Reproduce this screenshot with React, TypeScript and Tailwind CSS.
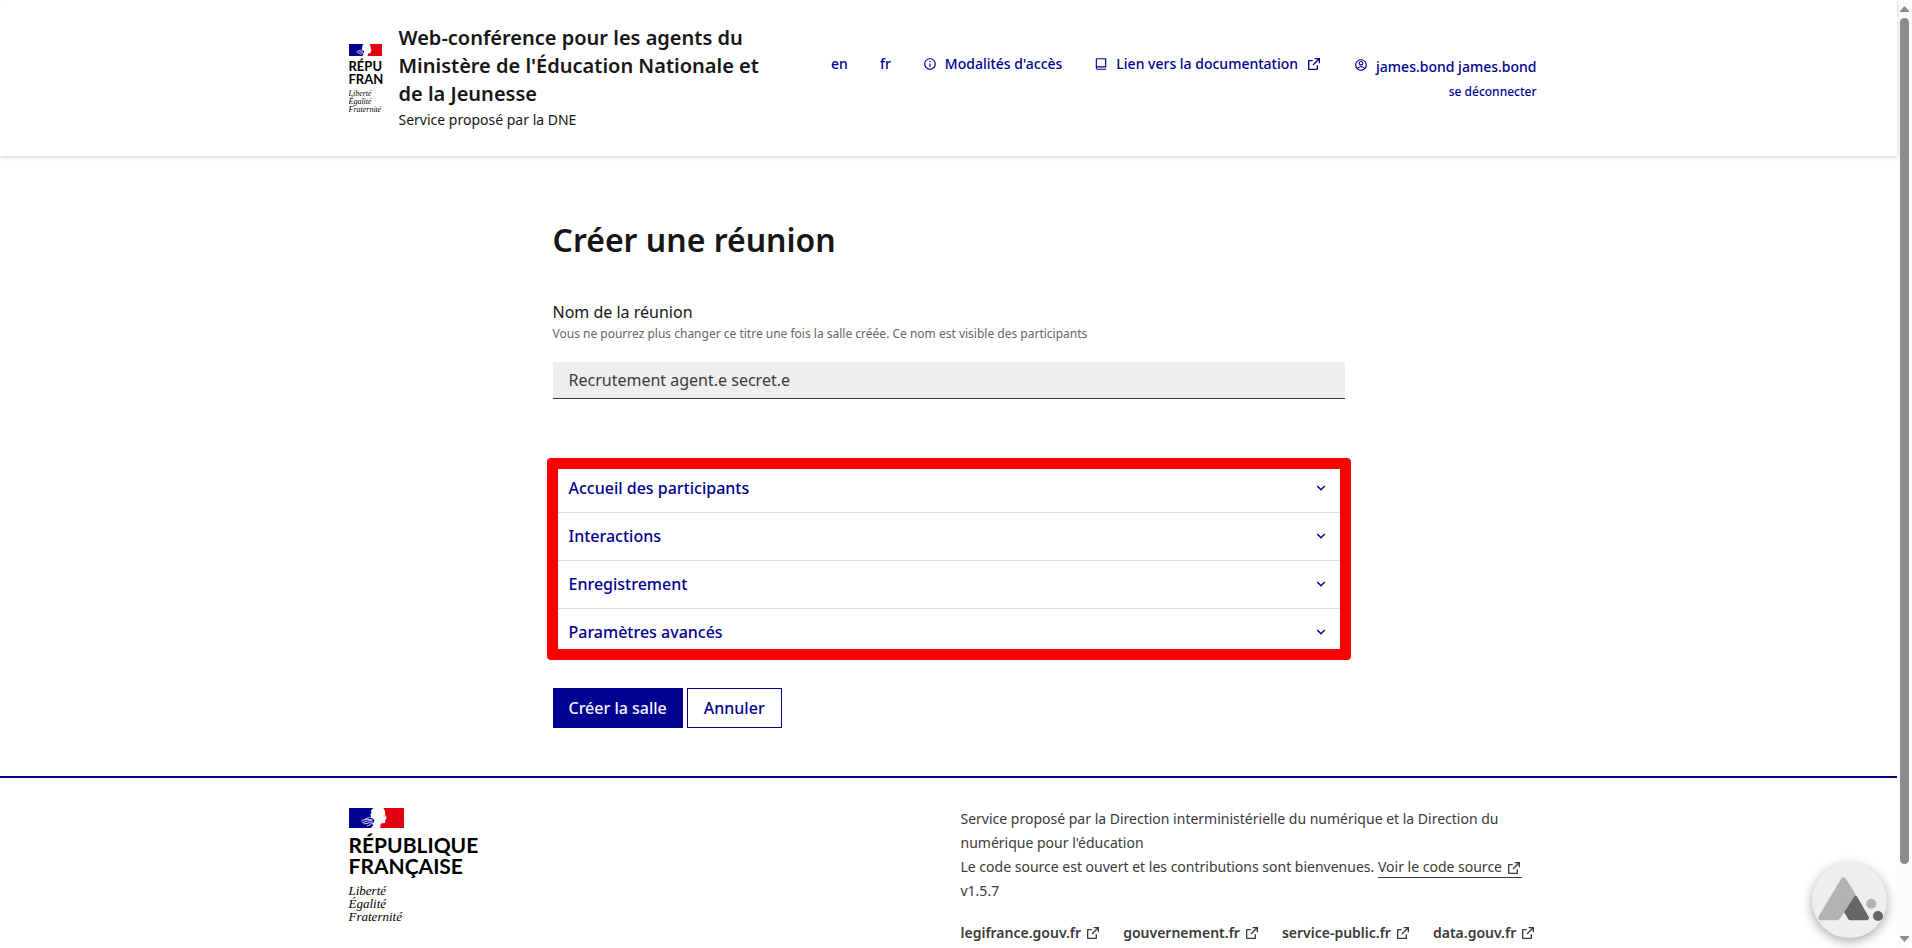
import React from "react";
import {
  RiInformationLine,
  RiExternalLinkLine,
  RiAccountCircleLine,
  RiArrowDownSLine,
} from "react-icons/ri";

function Flag({ className }: { className: string }) {
  return (
    <svg viewBox="0 0 165 60" className={className} aria-hidden="true">
      <path
        fill="#000091"
        d="M0 0h74c-5 3-8 7-8 11l2 3-4 6 2 4-2 5 6 2 6 5-1 6-6 6 4 4-7 8H0z"
      />
      <path
        fill="#e1000f"
        d="M103 0h62v60H94c-1-5 0-10 3-14 5-1 11 1 12-3l-1-6 3-2-1-3 3-3-5-9c1-6 1-12-5-20z"
      />
      <path
        fill="none"
        stroke="#fff"
        strokeWidth="2.5"
        d="M36 40c10-8 20-6 34-4M40 44c12-6 20-4 30-8M44 47c10 2 18-4 26-6M54 54c8-2 12-8 18-10M62 28c-6 2-10 3-15 7"
      />
      <path fill="#9a9a9a" d="M103 22l6 1-2 3z" />
    </svg>
  );
}

function BookIcon({ className }: { className: string }) {
  return (
    <svg viewBox="0 0 24 24" fill="currentColor" className={className} aria-hidden="true">
      <path d="M21 18H6a1 1 0 0 0 0 2h15v2H6a3 3 0 0 1-3-3V4a2 2 0 0 1 2-2h16v16zM5 16.05c.162-.033.329-.05.5-.05H19V4H5v12.05z" />
    </svg>
  );
}

const headerLink = "flex items-center whitespace-nowrap text-sm leading-6 font-medium text-[#000091]";

function Header() {
  return (
    <header className="relative bg-white shadow-[0_1px_4px_rgba(0,0,18,0.2)]">
      <div className="mx-auto flex max-w-[1200px] items-start justify-between pt-6 pb-6">
        <div className="flex items-center gap-4">
          <div className="w-[34px] shrink-0 overflow-hidden pt-0.5 text-black">
            <Flag className="block h-3 w-[33px]" />
            <p className="mt-1 font-['Lato',sans-serif] text-[13px] leading-[13px] font-bold">
              RÉPU
              <br />
              FRAN
            </p>
            <p className="mt-1 font-['Liberation_Serif',serif] text-[8px] leading-[8px] italic">
              Liberté
              <br />
              Égalité
              <br />
              Fraternité
            </p>
          </div>
          <div className="w-96">
            <p className="text-xl leading-7 font-semibold">
              Web-conférence pour les agents du Ministère de l'Éducation Nationale et de la Jeunesse
            </p>
            <p className="text-sm leading-6">Service proposé par la DNE</p>
          </div>
        </div>
        <nav className="flex items-start gap-8 pt-7 pr-3">
          <a href="#en" className={headerLink}>en</a>
          <a href="#fr" className={headerLink}>fr</a>
          <a href="#acces" className={headerLink}>
            <RiInformationLine className="mr-2 size-3.5" />
            Modalités d'accès
          </a>
          <a href="#doc" className={headerLink}>
            <BookIcon className="mr-2 size-3.5" />
            Lien vers la documentation
            <RiExternalLinkLine className="ml-2 size-4" />
          </a>
          <div className="flex flex-col items-end gap-px pt-[3px] text-[#000091]">
            <a href="#compte" className={headerLink}>
              <RiAccountCircleLine className="mr-2 mb-1 size-3.5" />
              james.bond james.bond
            </a>
            <a href="#logout" className="text-xs leading-6 font-medium">se déconnecter</a>
          </div>
        </nav>
      </div>
    </header>
  );
}

const sections = ["Accueil des participants", "Interactions", "Enregistrement", "Paramètres avancés"];

function MeetingForm() {
  return (
    <main className="mx-auto w-full max-w-[792px] pt-[60px] pb-12">
      <h1 className="text-[32px] leading-12 font-semibold">Créer une réunion</h1>
      <form onSubmit={(e) => e.preventDefault()}>
        <label htmlFor="room-name" className="mt-9 block text-base leading-6">
          Nom de la réunion
        </label>
        <p id="room-hint" className="text-xs leading-5 text-[#666666]">
          Vous ne pourrez plus changer ce titre une fois la salle créée. Ce nom est visible des participants
        </p>
        <input
          id="room-name"
          aria-describedby="room-hint"
          defaultValue="Recrutement agent.e secret.e"
          className="mt-[18px] block h-[37px] w-full border-b border-[#3a3a3a] bg-[#eeeeee] px-4 text-base text-[#3a3a3a] outline-none"
        />
        <div className="relative mt-[66px]">
          {sections.map((name) => (
            <button
              key={name}
              type="button"
              aria-expanded="false"
              className="flex h-12 w-full items-center justify-between border-b border-[#dddddd] px-4 pb-0.5 text-left text-base font-medium text-[#000091]"
            >
              {name}
              <RiArrowDownSLine className="size-4" />
            </button>
          ))}
          <div className="pointer-events-none absolute -inset-x-1.5 -top-[7px] -bottom-[3px] rounded border-[11px] border-[#ff0000]" />
        </div>
        <div className="mt-[31px] flex gap-1">
          <button type="submit" className="h-10 bg-[#000091] px-4 text-base font-medium text-[#f5f5fe]">
            Créer la salle
          </button>
          <button type="button" className="h-10 border border-[#000091] px-4 text-base font-medium text-[#000091]">
            Annuler
          </button>
        </div>
      </form>
    </main>
  );
}

const sites = ["legifrance.gouv.fr", "gouvernement.fr", "service-public.fr", "data.gouv.fr"];

function Footer() {
  return (
    <footer className="border-t-2 border-[#000091]">
      <div className="mx-auto flex max-w-[1200px] items-start justify-between pt-[29px]">
        <div className="pt-px text-black">
          <Flag className="block h-5 w-[55px]" />
          <p className="mt-1.5 font-['Lato',sans-serif] text-[21px] leading-[21px] font-bold">
            RÉPUBLIQUE
            <br />
            FRANÇAISE
          </p>
          <p className="mt-2 font-['Liberation_Serif',serif] text-[13px] leading-[13px] italic">
            Liberté
            <br />
            Égalité
            <br />
            Fraternité
          </p>
        </div>
        <div className="w-[588px] text-sm leading-6 text-[#3a3a3a]">
          <p>
            Service proposé par la Direction interministérielle du numérique et la Direction du numérique pour
            l'éducation
          </p>
          <p>
            Le code source est ouvert et les contributions sont bienvenues.{" "}
            <a href="#source" className="inline-block border-b border-[#3a3a3a] leading-5">
              Voir le code source <RiExternalLinkLine className="inline size-4 align-text-bottom" />
            </a>
          </p>
          <p>v1.5.7</p>
          <ul className="mt-[18px] flex gap-[22px]">
            {sites.map((site) => (
              <li key={site}>
                <a href={"https://" + site} className="flex items-center gap-1 font-semibold">
                  {site}
                  <RiExternalLinkLine className="size-4" />
                </a>
              </li>
            ))}
          </ul>
        </div>
      </div>
    </footer>
  );
}

function ScrollRail() {
  return (
    <div className="flex w-[15px] shrink-0 flex-col items-center bg-[#fcfcfc] pt-1.5 pb-1.5" aria-hidden="true">
      <svg viewBox="0 0 9 6" className="h-1.5 w-[9px]">
        <path fill="#8b8b8b" d="M4.5 0 9 5v1H0V5z" />
      </svg>
      <div className="mt-1.5 w-[9px] flex-1 rounded-full bg-[#8b8b8b]" />
      <svg viewBox="0 0 9 6" className="mt-[72px] h-1.5 w-[9px]">
        <path fill="#8b8b8b" d="M4.5 6 9 1V0H0v1z" />
      </svg>
    </div>
  );
}

function AssistantButton() {
  return (
    <button
      type="button"
      aria-label="Assistance"
      className="absolute right-[25px] bottom-[10px] size-[75px] rounded-full bg-[#eeeeee] shadow-[0_3px_12px_rgba(0,0,0,0.35)]"
    >
      <svg viewBox="0 0 225 225" className="size-full">
        <path
          fill="#666666"
          stroke="#666666"
          strokeWidth="14"
          strokeLinejoin="round"
          d="M129 104 164 165H115L103 145z"
        />
        <path
          fill="#b3b3b3"
          stroke="#b3b3b3"
          strokeWidth="16"
          strokeLinejoin="round"
          d="M94 51 122 94 80 158Q76 164 70 164H27z"
        />
        <circle cx="178" cy="122" r="15" fill="#b3b3b3" />
        <circle cx="198" cy="159" r="15" fill="#666666" />
      </svg>
    </button>
  );
}

export default function App() {
  return (
    <div className="relative flex h-screen overflow-hidden rounded-lg bg-white font-['Noto_Sans','Open_Sans',sans-serif] text-[#161616]">
      <div className="min-w-0 flex-1">
        <Header />
        <MeetingForm />
        <Footer />
      </div>
      <ScrollRail />
      <AssistantButton />
    </div>
  );
}
